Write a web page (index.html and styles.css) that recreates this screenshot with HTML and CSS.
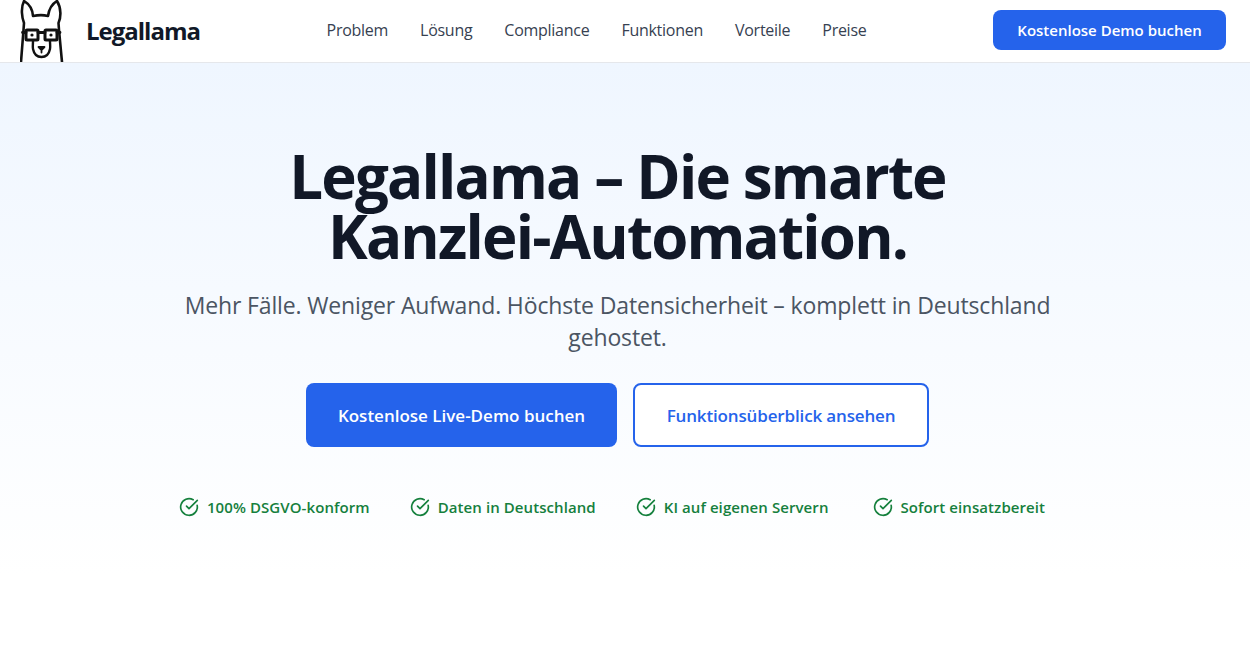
FILE: index.html
```html
<!DOCTYPE html>
<html lang="de">
<head>
    <meta charset="UTF-8">
    <meta name="viewport" content="width=device-width, initial-scale=1.0">
    <title>Legallama</title>
    <link rel="stylesheet" href="styles.css">
</head>
<body>
    <header class="site-header">
        <a href="#" class="brand">
            <svg class="brand-logo" viewBox="0 0 44 62" width="44" height="62" fill="none" stroke="#111" stroke-width="2.6" stroke-linecap="round" stroke-linejoin="round">
                <path d="M1 62 L3.5 30 L4 23 C2 18 0.5 8 4 1 C9 4 12.5 9 13 16 C18 15 24 15 28 16 C29 9 32 4 37 1 C41.5 8 41 18 38.5 23 L39 30 L42 62"/>
                <rect x="6" y="30" width="12" height="10" rx="1" stroke-width="3"/>
                <rect x="25" y="30" width="12" height="10" rx="1" stroke-width="3"/>
                <path d="M18 32.5 H25 M2.5 32.5 H6 M37 32.5 H40" stroke-width="2.8"/>
                <path d="M13 41 C13 44 12.5 47 13 49 C14 54 17 57 21.5 57 C26 57 29 54 30 49 C30.5 47 30 44 30 41" stroke-width="2.4"/>
                <path d="M18.5 47 H24.5 L21.5 50 Z M21.5 50 V52.5" fill="#111" stroke-width="1.8"/>
                <circle cx="12" cy="35" r="1.6" fill="#111" stroke="none"/>
                <circle cx="31" cy="35" r="1.6" fill="#111" stroke="none"/>
            </svg>
            <span class="brand-name">Legallama</span>
        </a>
        <nav class="main-nav">
            <a href="#">Problem</a>
            <a href="#">Lösung</a>
            <a href="#">Compliance</a>
            <a href="#">Funktionen</a>
            <a href="#">Vorteile</a>
            <a href="#">Preise</a>
        </nav>
        <a href="#" class="btn btn-small">Kostenlose Demo buchen</a>
    </header>

    <main class="hero">
        <h1>Legallama – Die smarte Kanzlei-Automation.</h1>
        <p class="lead">Mehr Fälle. Weniger Aufwand. Höchste Datensicherheit – komplett in Deutschland gehostet.</p>
        <div class="actions">
            <a href="#" class="btn btn-large">Kostenlose Live-Demo buchen</a>
            <a href="#" class="btn btn-large btn-outline">Funktionsüberblick ansehen</a>
        </div>
        <ul class="features">
            <li><svg viewBox="0 0 24 24" width="20" height="20" fill="none" stroke="currentColor" stroke-width="2" stroke-linecap="round" stroke-linejoin="round"><path d="M21.8 10A10 10 0 1 1 17 3.3"/><path d="m9 11 3 3L22 4"/></svg>100% DSGVO-konform</li>
            <li><svg viewBox="0 0 24 24" width="20" height="20" fill="none" stroke="currentColor" stroke-width="2" stroke-linecap="round" stroke-linejoin="round"><path d="M21.8 10A10 10 0 1 1 17 3.3"/><path d="m9 11 3 3L22 4"/></svg>Daten in Deutschland</li>
            <li><svg viewBox="0 0 24 24" width="20" height="20" fill="none" stroke="currentColor" stroke-width="2" stroke-linecap="round" stroke-linejoin="round"><path d="M21.8 10A10 10 0 1 1 17 3.3"/><path d="m9 11 3 3L22 4"/></svg>KI auf eigenen Servern</li>
            <li><svg viewBox="0 0 24 24" width="20" height="20" fill="none" stroke="currentColor" stroke-width="2" stroke-linecap="round" stroke-linejoin="round"><path d="M21.8 10A10 10 0 1 1 17 3.3"/><path d="m9 11 3 3L22 4"/></svg>Sofort einsatzbereit</li>
        </ul>
    </main>
</body>
</html>
```

FILE: styles.css
```css
* {
    box-sizing: border-box;
}
body {
    margin: 0;
    font-family: "Open Sans", "Noto Sans", sans-serif;
    color: #111827;
    background-color: #fff;
}
a {
    text-decoration: none;
}
.site-header {
    display: flex;
    align-items: center;
    justify-content: space-between;
    height: 63px;
    padding: 0 24px 2px 20px;
    background-color: #fff;
    border-bottom: 1px solid #e5e7eb;
}
.brand {
    display: flex;
    align-items: center;
    gap: 22px;
    color: #111827;
}
.brand-logo {
    display: block;
    margin-bottom: -2px;
}
.brand-name {
    font-size: 24px;
    font-weight: 700;
    letter-spacing: -1px;
}
.main-nav {
    display: flex;
    gap: 32px;
}
.main-nav a {
    font-size: 16px;
    font-weight: 500;
    color: #374151;
    letter-spacing: -0.27px;
}
.btn {
    display: inline-flex;
    align-items: center;
    justify-content: center;
    background-color: #2563eb;
    color: #fff;
    font-weight: 600;
    border-radius: 8px;
}
.btn-small {
    width: 233px;
    height: 40px;
    font-size: 15px;
}
.btn-large {
    height: 64px;
    font-size: 17px;
}
.btn-large:first-child {
    width: 311px;
}
.btn-outline {
    width: 296px;
    background-color: #fff;
    color: #2563eb;
    border: 2px solid #2563eb;
    letter-spacing: -0.15px;
}
.hero {
    height: 603px;
    padding: 83px 15px 0 0;
    text-align: center;
    background: linear-gradient(to bottom, #eff6ff, #fff 85%);
}
.hero h1 {
    width: 768px;
    margin: 0 auto;
    font-size: 60px;
    line-height: 60px;
    font-weight: 700;
    letter-spacing: -1.8px;
}
.lead {
    width: 896px;
    margin: 23px auto 0;
    font-size: 23px;
    line-height: 32px;
    color: #4b5563;
    letter-spacing: -0.14px;
}
.actions {
    display: flex;
    justify-content: center;
    gap: 16px;
    margin-top: 30px;
}
.features {
    display: flex;
    justify-content: center;
    gap: 40px;
    margin: 50px 0 0;
    padding: 0 11px 0 0;
    list-style: none;
    font-size: 15px;
    font-weight: 600;
    color: #15803d;
    letter-spacing: 0.08px;
}
.features li {
    display: flex;
    align-items: center;
    gap: 8px;
}
.features li:last-child {
    margin-left: 4px;
}
```
